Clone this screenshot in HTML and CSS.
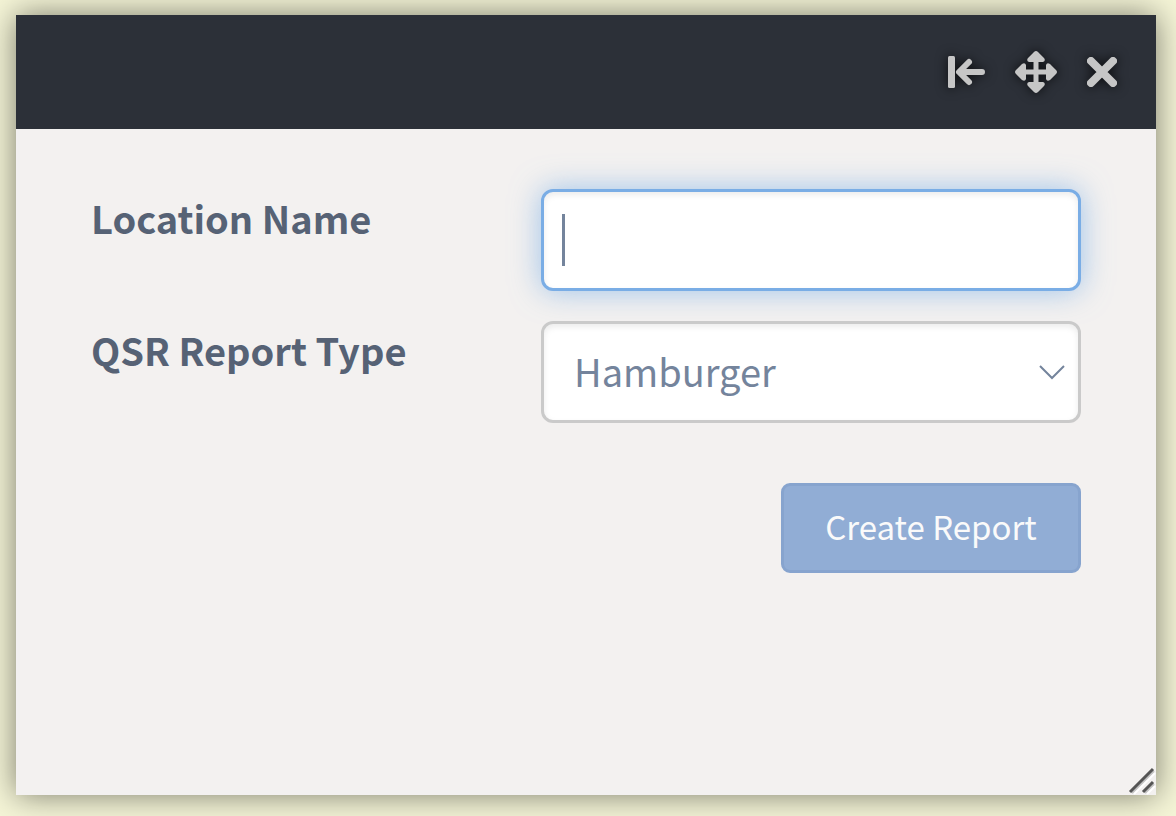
FILE: index.html
```html
<!DOCTYPE html>
<html lang="en">
<head>
  <meta charset="UTF-8" />
  <meta name="viewport" content="width=device-width, initial-scale=1.0">
  <title>Create Report</title>
  <link rel="stylesheet" href="styles.css">
</head>
<body>
  <div class="dialog">
    <header class="titlebar">
      <button type="button" class="tool" aria-label="Dock left">
        <svg width="44" height="44" viewBox="0 0 44 44">
          <rect x="0" y="6" width="7" height="32" rx="1.5" />
          <path class="stroke" d="M34 22H12M21 12L11 22L21 32" />
        </svg>
      </button>
      <button type="button" class="tool" aria-label="Move">
        <svg width="44" height="44" viewBox="0 0 44 44">
          <path d="M22 1Q23 1 24 2L30 8Q32 11 29 12H24.500V19.500H32V15Q33 12 36 14L42 20Q44 22 42 24L36 30Q33 32 32 29V24.500H24.500V32H29Q32 33 30 36L24 42Q22 44 20 42L14 36Q12 33 15 32H19.500V24.500H12V29Q11 32 8 30L2 24Q0 22 2 20L8 14Q11 12 12 15V19.500H19.500V12H15Q12 11 14 8L20 2Q21 1 22 1Z" />
        </svg>
      </button>
      <button type="button" class="tool" aria-label="Close">
        <svg width="44" height="44" viewBox="0 0 44 44">
          <path class="cross" d="M11 11L33 33M33 11L11 33" />
        </svg>
      </button>
    </header>

    <form class="form">
      <label for="location">Location Name</label>
      <div class="field focused">
        <input type="text" id="location" name="location" />
        <span class="caret"></span>
      </div>

      <label for="type">QSR Report Type</label>
      <div class="field">
        <select id="type" name="type">
          <option>Hamburger</option>
        </select>
        <svg class="chevron" width="26" height="16" viewBox="0 0 26 16">
          <path d="M1 1L13 13L25 1" />
        </svg>
      </div>

      <button type="submit" class="submit">Create Report</button>
    </form>

    <svg class="grip" width="28" height="28" viewBox="0 0 28 28">
      <path class="light" d="M6 27L27 6M19 27L27 19" />
      <path class="mid" d="M4 26L26 4M17 26L26 17" />
      <path class="dark" d="M2 25L25 2M15 25L25 15" />
    </svg>
  </div>
</body>
</html>
```
FILE: styles.css
```css
* {
  box-sizing: border-box;
}
body {
  margin: 0;
  padding: 15px 20px 21px 16px;
  min-height: 100vh;
  display: flex;
  background-color: #f5f5d7;
  font-family: "Noto Sans CJK SC", "Open Sans", sans-serif;
  font-size: 38px;
  color: #566275;
}
button, input, select {
  font: inherit;
}
.dialog {
  position: relative;
  flex: 1;
  background-color: #f3f1f0;
  box-shadow: 0 0 30px rgba(0, 0, 0, 0.5);
}
.titlebar {
  display: flex;
  justify-content: flex-end;
  align-items: center;
  gap: 22px;
  height: 114px;
  padding: 0 32px;
  background-color: #2c3038;
}
.tool {
  display: flex;
  padding: 0;
  border: none;
  background: none;
  cursor: pointer;
}
.tool svg {
  overflow: visible;
  fill: #c6c6c6;
  filter: drop-shadow(0 0 6px rgba(0, 0, 0, 0.8));
}
.tool .stroke, .tool .cross {
  fill: none;
  stroke: #c6c6c6;
  stroke-width: 6;
  stroke-linecap: round;
  stroke-linejoin: round;
}
.tool .cross {
  stroke-width: 8;
}
.form {
  display: grid;
  grid-template-columns: 5fr 6fr;
  row-gap: 30px;
  padding: 60px 75px;
}
label {
  font-weight: bold;
  line-height: 58px;
}
.field {
  position: relative;
}
.field input, .field select {
  display: block;
  width: 100%;
  height: 102px;
  padding: 0 30px 4px;
  border: 3px solid #cacaca;
  border-radius: 12px;
  outline: none;
  appearance: none;
  background-color: #fff;
  box-shadow: inset 0 3px 6px rgba(0, 0, 0, 0.08);
  color: #74849c;
}
.field.focused input {
  border-color: #7aade5;
  box-shadow: inset 0 3px 6px rgba(0, 0, 0, 0.08), 0 0 30px rgba(102, 163, 229, 0.6);
}
.caret {
  position: absolute;
  left: 21px;
  top: 25px;
  width: 3px;
  height: 52px;
  background-color: #74849c;
}
.chevron {
  position: absolute;
  right: 16px;
  top: 44px;
  fill: none;
  stroke: #74849c;
  stroke-width: 2;
  pointer-events: none;
}
.submit {
  grid-column: 2;
  justify-self: end;
  width: 300px;
  height: 90px;
  margin-top: 30px;
  padding: 0 0 4px;
  border: 3px solid #87a4ce;
  border-radius: 9px;
  background-color: #91add5;
  color: #fafafa;
  font-size: 33px;
  cursor: pointer;
}
.grip {
  position: absolute;
  right: 0;
  bottom: 0;
  fill: none;
  stroke-width: 2;
}
.grip .dark {
  stroke: #555;
  stroke-width: 3;
}
.grip .mid {
  stroke: #c4c4c4;
}
.grip .light {
  stroke: #fff;
}
```
